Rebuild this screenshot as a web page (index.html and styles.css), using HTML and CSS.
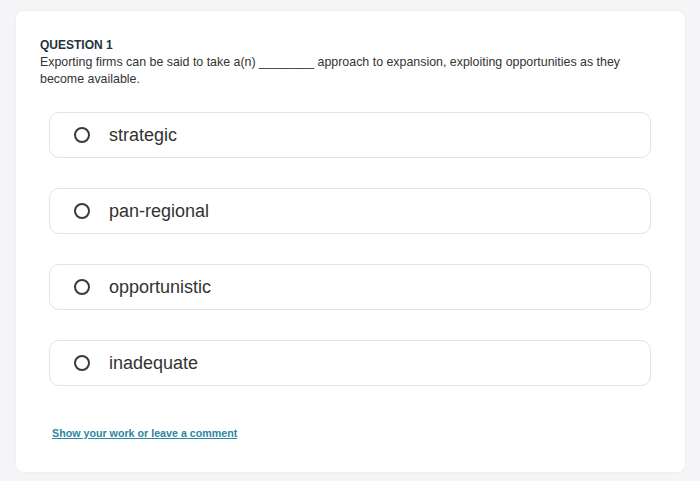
FILE: index.html
```html
<!DOCTYPE html>
<html>
<head>
<meta charset="utf-8">
<link rel="stylesheet" href="styles.css">
</head>
<body>
<div class="card">
  <div class="q-title">QUESTION 1</div>
  <div class="q-text">Exporting firms can be said to take a(n) ________ approach to expansion, exploiting opportunities as they become available.</div>
  <div class="options">
    <label class="option"><span class="radio"></span><span class="opt-text">strategic</span></label>
    <label class="option"><span class="radio"></span><span class="opt-text">pan-regional</span></label>
    <label class="option"><span class="radio"></span><span class="opt-text">opportunistic</span></label>
    <label class="option"><span class="radio"></span><span class="opt-text">inadequate</span></label>
  </div>
  <a class="comment" href="#">Show your work or leave a comment</a>
</div>
</body>
</html>
```
FILE: styles.css
```css
html, body {
  margin: 0;
  padding: 0;
  background: #f5f5f8;
  font-family: "Liberation Sans", Arial, sans-serif;
}
body {
  padding: 11px 15px 9px 16px;
}
.card {
  background: #fff;
  border-radius: 8px;
  box-shadow: 0 0 3px rgba(0,0,0,0.06);
  height: 461px;
  box-sizing: border-box;
  padding: 27px 24px 0 24px;
}
.q-title {
  font-size: 12px;
  font-weight: bold;
  color: #1e3440;
  line-height: 14px;
}
.q-text {
  font-size: 12.4px;
  color: #333;
  line-height: 17px;
  margin-top: 2px;
  padding-right: 40px;
}
.options {
  display: flex;
  flex-direction: column;
  gap: 30px;
  margin: 24px 10px 0 9px;
}
.option {
  display: flex;
  align-items: center;
  height: 46px;
  box-sizing: border-box;
  border: 1px solid #e3e3e3;
  border-radius: 10px;
  padding-left: 24px;
}
.radio {
  width: 16px;
  height: 16px;
  box-sizing: border-box;
  border: 2px solid #3a3a3a;
  border-radius: 50%;
  flex: none;
}
.opt-text {
  margin-left: 19px;
  font-size: 18px;
  color: #333;
}
.comment {
  display: inline-block;
  margin: 41px 0 0 12px;
  font-size: 10.7px;
  font-weight: bold;
  color: #2e86a1;
  text-decoration: underline;
}
```
